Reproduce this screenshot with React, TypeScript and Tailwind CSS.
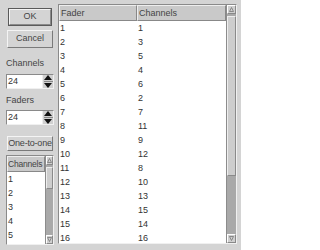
import React from "react";

const font = { fontFamily: '"Liberation Sans", Arial, sans-serif' };

function Button({ label, def, className }: { label: string; def?: boolean; className: string }) {
  if (def) {
    return (
      <div className={`border border-[#5a5a5a] ${className}`}>
        <div className="w-full h-full border-t border-l border-t-[#f4f4f4] border-l-[#f4f4f4] border-b border-r border-b-[#8a8a8a] border-r-[#8a8a8a] flex items-center justify-center text-[9px] text-[#444] whitespace-nowrap">
          {label}
        </div>
      </div>
    );
  }
  return (
    <div className={`border-t border-l border-t-[#f4f4f4] border-l-[#f4f4f4] border-b border-r border-b-[#7a7a7a] border-r-[#7a7a7a] flex items-center justify-center text-[9px] text-[#444] whitespace-nowrap ${className}`}>
      {label}
    </div>
  );
}

function Spin({ className }: { className: string }) {
  return (
    <div className={`flex border-t border-l border-t-[#8a8a8a] border-l-[#8a8a8a] border-b border-r border-b-[#f0f0f0] border-r-[#f0f0f0] ${className}`}>
      <div className="flex-1 bg-white text-[9px] text-[#333] pl-[1px] flex items-center">24</div>
      <div className="w-[11px] bg-[#d0d0d0] flex flex-col items-center justify-center gap-[1px] border-l border-[#eeeeee]">
        <svg width="8" height="5" viewBox="0 0 8 5">
          <polygon points="4,0 8,5 0,5" fill="#111" />
        </svg>
        <div className="w-[9px] h-px bg-[#888]" />
        <svg width="8" height="5" viewBox="0 0 8 5">
          <polygon points="0,0 8,0 4,5" fill="#111" />
        </svg>
      </div>
    </div>
  );
}

function ScrollBar({ thumbTop, thumbH, className }: { thumbTop: number; thumbH: number; className: string }) {
  return (
    <div className={`flex flex-col shrink-0 bg-[#a9a9a9] border-l border-[#8c8c8c] ${className}`}>
      <div className="h-[9px] flex items-center justify-center bg-[#cfcfcf] border-t border-l border-t-white border-l-white border-b border-r border-b-[#888] border-r-[#888]">
        <svg width="5" height="5" viewBox="0 0 5 5">
          <polygon points="2.5,0.5 4.5,4.5 0.5,4.5" fill="none" stroke="#777" strokeWidth="0.8" />
        </svg>
      </div>
      <div className="flex-1 relative">
        <div
          className="absolute left-0 right-0 bg-[#cdcdcd] border-t border-l border-t-[#eee] border-l-[#eee] border-b border-r border-b-[#8a8a8a] border-r-[#8a8a8a]"
          style={{ top: thumbTop, height: thumbH }}
        />
      </div>
      <div className="h-[9px] flex items-center justify-center bg-[#cfcfcf] border-t border-l border-t-white border-l-white border-b border-r border-b-[#888] border-r-[#888]">
        <svg width="5" height="5" viewBox="0 0 5 5">
          <polygon points="0.5,0.5 4.5,0.5 2.5,4.5" fill="none" stroke="#777" strokeWidth="0.8" />
        </svg>
      </div>
    </div>
  );
}

const pairs: [number, number][] = [
  [1, 1], [2, 3], [3, 5], [4, 4], [5, 6], [6, 2], [7, 7], [8, 11],
  [9, 9], [10, 12], [11, 8], [12, 10], [13, 13], [14, 15], [15, 14], [16, 16],
];

export default function App() {
  return (
    <div className="w-[241px] h-[250px] bg-[#d4d4d4] flex overflow-hidden" style={font}>
      <div className="w-[58px] flex flex-col shrink-0">
        <Button label="OK" def className="mt-[8px] ml-[8px] w-[44px] h-[18px]" />
        <Button label="Cancel" className="mt-[4px] ml-[7px] w-[46px] h-[18px]" />
        <div className="mt-[10px] ml-[6px] h-[11px] leading-[11px] text-[9px] text-[#444]">Channels</div>
        <Spin className="mt-[5px] ml-[6px] w-[48px] h-[15px]" />
        <div className="mt-[6px] ml-[6px] h-[11px] leading-[11px] text-[9px] text-[#444]">Faders</div>
        <Spin className="mt-[4px] ml-[6px] w-[48px] h-[15px]" />
        <Button label="One-to-one" className="mt-[11px] ml-[7px] w-[46px] h-[15px] tracking-[-0.2px]" />
        <div className="mt-[4px] ml-[6px] w-[48px] h-[90px] flex border-t border-l border-t-[#8a8a8a] border-l-[#8a8a8a] border-b border-r border-b-[#f0f0f0] border-r-[#f0f0f0] bg-white">
          <div className="flex-1 min-w-0 flex flex-col overflow-hidden">
            <div className="h-[16px] shrink-0 bg-[#c9c9c9] border-t border-l border-t-[#eee] border-l-[#eee] border-b border-r border-b-[#888] border-r-[#888] text-[8.5px] text-[#444] leading-[14px] whitespace-nowrap tracking-[-0.2px]">
              Channels
            </div>
            {[1, 2, 3, 4, 5].map((n) => (
              <div key={n} className="h-[14px] shrink-0 leading-[14px] text-[9px] text-[#333] pl-[1px]">
                {n}
              </div>
            ))}
          </div>
          <ScrollBar thumbTop={2} thumbH={22} className="w-[8px]" />
        </div>
      </div>
      <div className="mt-[4px] w-[179px] h-[240px] flex border-t border-l border-t-[#8a8a8a] border-l-[#8a8a8a] border-b border-r border-b-[#f0f0f0] border-r-[#f0f0f0] bg-white">
        <div className="flex-1 flex flex-col overflow-hidden">
          <div className="h-[16px] shrink-0 flex bg-[#c9c9c9] text-[9px] text-[#444] leading-[14px]">
            <div className="w-[78px] pl-[1px] border-t border-l border-t-[#eee] border-l-[#eee] border-b border-r border-b-[#888] border-r-[#888]">Fader</div>
            <div className="flex-1 pl-[1px] border-t border-l border-t-[#eee] border-l-[#eee] border-b border-r border-b-[#888] border-r-[#888]">Channels</div>
          </div>
          {pairs.map(([f, c]) => (
            <div key={f} className="h-[14px] shrink-0 flex leading-[14px] text-[9px] text-[#333]">
              <div className="w-[78px] pl-[1px]">{f}</div>
              <div className="flex-1 pl-[1px]">{c}</div>
            </div>
          ))}
        </div>
        <ScrollBar thumbTop={2} thumbH={160} className="w-[10px]" />
      </div>
    </div>
  );
}
